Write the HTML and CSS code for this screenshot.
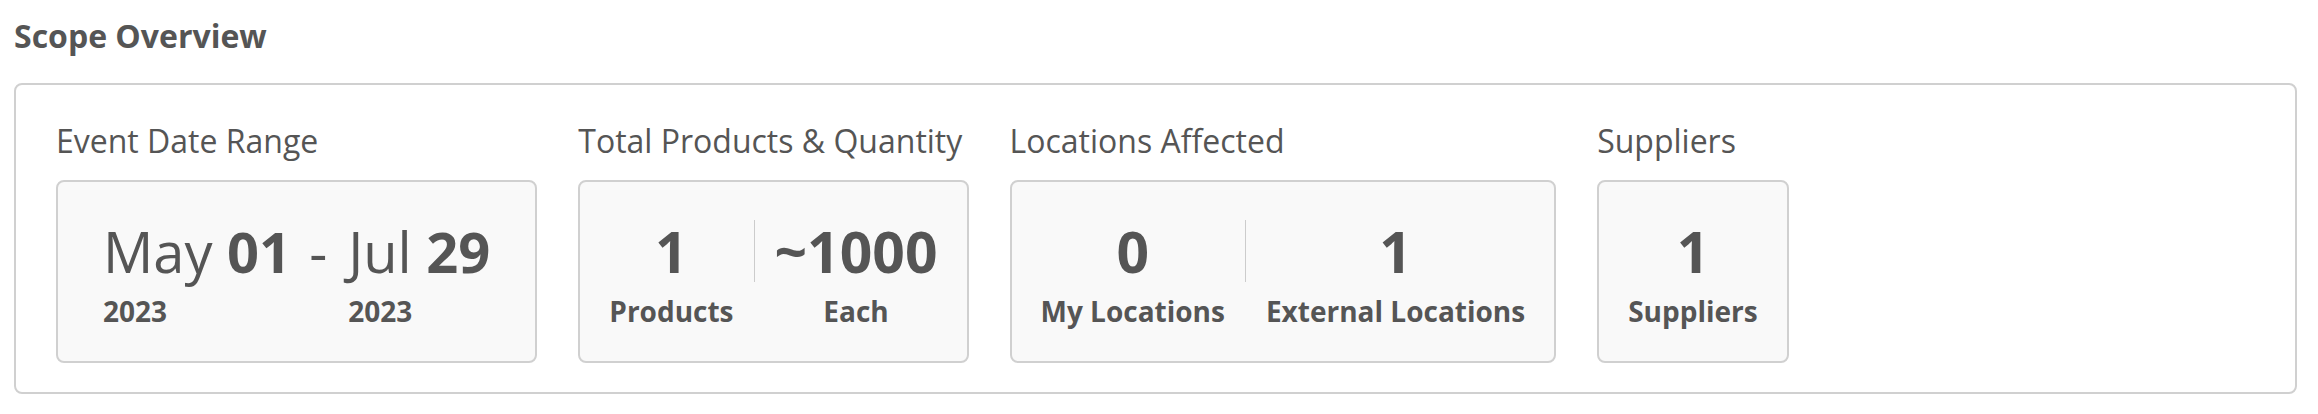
FILE: index.html
```html
<!DOCTYPE html>
<html lang="en">
<head>
<meta charset="utf-8">
<title>Scope Overview</title>
<link rel="stylesheet" href="styles.css">
</head>
<body>
<div class="page">
  <h2 class="title">Scope Overview</h2>
  <div class="card">
    <div class="metric">
      <div class="metric-label">Event Date Range</div>
      <div class="box box-date">
        <div class="date">
          <div class="date-main">May <b>01</b></div>
          <div class="sub">2023</div>
        </div>
        <div class="date-sep">-</div>
        <div class="date">
          <div class="date-main">Jul <b>29</b></div>
          <div class="sub">2023</div>
        </div>
      </div>
    </div>
    <div class="metric">
      <div class="metric-label">Total Products &amp; Quantity</div>
      <div class="box">
        <div class="cell">
          <div class="num">1</div>
          <div class="sub">Products</div>
        </div>
        <div class="divider"></div>
        <div class="cell">
          <div class="num">~1000</div>
          <div class="sub">Each</div>
        </div>
      </div>
    </div>
    <div class="metric">
      <div class="metric-label">Locations Affected</div>
      <div class="box">
        <div class="cell">
          <div class="num">0</div>
          <div class="sub">My Locations</div>
        </div>
        <div class="divider"></div>
        <div class="cell">
          <div class="num">1</div>
          <div class="sub">External Locations</div>
        </div>
      </div>
    </div>
    <div class="metric">
      <div class="metric-label">Suppliers</div>
      <div class="box">
        <div class="cell">
          <div class="num">1</div>
          <div class="sub">Suppliers</div>
        </div>
      </div>
    </div>
  </div>
</div>
</body>
</html>
```

FILE: styles.css
```css
body {
  margin: 0;
  font-family: "Open Sans", "Noto Sans", sans-serif;
  color: #555555;
  background: #ffffff;
}

.page {
  padding: 17px 21px 0 14px;
}

.title {
  margin: 0;
  font-size: 32px;
  font-weight: 700;
  line-height: 38px;
}

.card {
  margin-top: 28px;
  border: 2px solid #d0d0d0;
  border-radius: 8px;
  padding: 37px 40px 29px;
  display: flex;
  align-items: flex-start;
  gap: 41px;
}

.metric {
  display: flex;
  flex-direction: column;
  align-items: flex-start;
}

.metric-label {
  font-size: 32px;
  line-height: 38px;
  margin-bottom: 20px;
  white-space: nowrap;
}

.box {
  display: flex;
  align-items: flex-start;
  border: 2px solid #d0d0d0;
  border-radius: 8px;
  background: #f9f9f9;
  padding: 38px 9px 33px;
}

.cell {
  display: flex;
  flex-direction: column;
  align-items: center;
  padding: 0 20px;
}

.num {
  font-size: 57px;
  font-weight: 700;
  line-height: 62px;
  white-space: nowrap;
}

.sub {
  font-size: 28px;
  font-weight: 700;
  line-height: 34px;
  margin-top: 12px;
  white-space: nowrap;
}

.divider {
  flex: none;
  width: 1px;
  height: 62px;
  background: #cccccc;
}

.box-date {
  padding: 38px 45px 33px;
}

.date {
  display: flex;
  flex-direction: column;
  align-items: flex-start;
}

.date-main {
  font-size: 56px;
  line-height: 62px;
  white-space: nowrap;
}

.date-main b {
  font-weight: 700;
}

.date-sep {
  font-size: 56px;
  line-height: 62px;
  padding: 0 21px 0 18px;
}
```
